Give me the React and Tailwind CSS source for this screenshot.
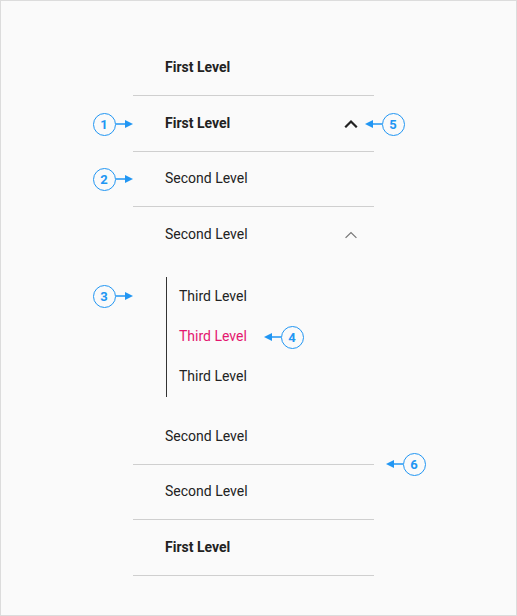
import React from "react";

const Chevron = ({ bold }) => (
  <svg
    width="14"
    height="9"
    viewBox="0 0 14 9"
    fill="none"
    stroke={bold ? "#222" : "#777"}
    strokeWidth={bold ? 2.2 : 1.2}
    strokeLinecap="square"
  >
    <polyline points="2,7.5 7,2.5 12,7.5" />
  </svg>
);

const Badge = ({ n, x, y, dir, len = 17 }) => {
  // x,y = circle centre; arrow goes right (dir "r") or left (dir "l")
  const circle = (
    <div className="w-[23px] h-[23px] rounded-full border-[1.5px] border-[#2196f3] bg-[#fafafa] flex items-center justify-center text-[13px] font-bold text-[#2196f3] leading-none">
      {n}
    </div>
  );
  const arrow = (
    <svg width={len} height="10" viewBox={`0 0 ${len} 10`}>
      {dir === "r" ? (
        <>
          <line x1="0" y1="5" x2={len - 6} y2="5" stroke="#2196f3" strokeWidth="1.5" />
          <polygon points={`${len - 8},1 ${len},5 ${len - 8},9`} fill="#2196f3" />
        </>
      ) : (
        <>
          <line x1="6" y1="5" x2={len} y2="5" stroke="#2196f3" strokeWidth="1.5" />
          <polygon points="8,1 0,5 8,9" fill="#2196f3" />
        </>
      )}
    </svg>
  );
  return (
    <div
      className="absolute flex items-center"
      style={
        dir === "r"
          ? { left: x - 11.5, top: y - 11.5 }
          : { left: x - 11.5 - len, top: y - 11.5 }
      }
    >
      {dir === "r" ? (
        <>
          {circle}
          {arrow}
        </>
      ) : (
        <>
          {arrow}
          {circle}
        </>
      )}
    </div>
  );
};

const Row = ({ label, bold, chevron, border = true, h = "h-[56px]" }) => (
  <div
    className={`${h} flex items-center justify-between pl-8 pr-[16px] pb-[1px] text-[14px] text-[#222] ${
      bold ? "font-bold" : ""
    } ${border ? "border-b border-[#cfcfcf]" : ""}`}
  >
    <span>{label}</span>
    {chevron && <Chevron bold={chevron === "bold"} />}
  </div>
);

export default function App() {
  return (
    <div
      className="relative w-[517px] h-[616px] border border-[#dcdcdc] bg-[#fafafa]"
      style={{ fontFamily: "Roboto, 'Noto Sans', sans-serif" }}
    >
      <div className="ml-[132px] w-[241px] pt-[39px]">
        <Row label="First Level" bold />
        <Row label="First Level" bold chevron="bold" />
        <Row label="Second Level" h="h-[55px]" />
        <Row label="Second Level" chevron="thin" border={false} h="h-[55px]" />
        <div className="mt-[15px] mb-[12px] ml-[33px] border-l border-[#333] pl-[12px] text-[14px]">
          <div className="h-[40px] flex items-center pb-[2px] text-[#222]">Third Level</div>
          <div className="h-[40px] flex items-center pb-[2px] text-[#e4166f]">Third Level</div>
          <div className="h-[40px] flex items-center pb-[2px] text-[#222]">Third Level</div>
        </div>
        <Row label="Second Level" />
        <Row label="Second Level" h="h-[55px]" />
        <Row label="First Level" bold />
      </div>

      <Badge n="1" x={103} y={123} dir="r" />
      <Badge n="2" x={103} y={178} dir="r" />
      <Badge n="3" x={103} y={295} dir="r" />
      <Badge n="4" x={291} y={336} dir="l" />
      <Badge n="5" x={392} y={123} dir="l" />
      <Badge n="6" x={413} y={463} dir="l" />
    </div>
  );
}
